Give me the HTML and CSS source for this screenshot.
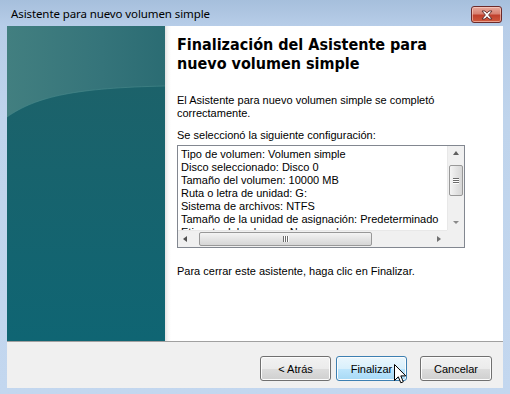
FILE: index.html
```html
<!DOCTYPE html>
<html lang="es">
<head>
<meta charset="utf-8">
<title>Asistente para nuevo volumen simple</title>
<link rel="stylesheet" href="styles.css">
</head>
<body>
<div class="window">
  <div class="titlebar">
    <span class="title">Asistente para nuevo volumen simple</span>
    <div class="close">
      <svg width="14" height="10" viewBox="0 0 14 10">
        <path d="M2 1 L5 1 L7 3.2 L9 1 L12 1 L8.6 5 L12 9 L9 9 L7 6.8 L5 9 L2 9 L5.4 5 Z" fill="#ffffff" stroke="#5a2a28" stroke-width="0.9" stroke-linejoin="round"/>
      </svg>
    </div>
  </div>
  <div class="client">
    <div class="main">
      <div class="side">
        <svg class="wave" width="158" height="315" viewBox="0 0 158 315" preserveAspectRatio="none">
          <defs>
            <linearGradient id="low" x1="0" y1="0" x2="0" y2="1">
              <stop offset="0" stop-color="#1c626a"/>
              <stop offset="1" stop-color="#0f6573"/>
            </linearGradient>
          </defs>
          <path d="M0 91 C 30 70, 70 62, 158 60 L158 315 L0 315 Z" fill="url(#low)"/>
          <path d="M0 91 C 30 70, 70 62, 158 60" fill="none" stroke="#4a8a8c" stroke-width="1" opacity="0.6"/>
        </svg>
      </div>
      <div class="content">
        <h1 class="heading">Finalización del Asistente para nuevo volumen simple</h1>
        <p class="text intro">El Asistente para nuevo volumen simple se completó correctamente.</p>
        <p class="text label">Se seleccionó la siguiente configuración:</p>
        <div class="listbox">
          <div class="lines">
            <div>Tipo de volumen: Volumen simple</div>
            <div>Disco seleccionado: Disco 0</div>
            <div>Tamaño del volumen: 10000 MB</div>
            <div>Ruta o letra de unidad: G:</div>
            <div>Sistema de archivos: NTFS</div>
            <div>Tamaño de la unidad de asignación: Predeterminado</div>
            <div>Etiqueta del volumen: Nuevo vol</div>
          </div>
          <div class="vscroll">
            <span class="arrow up"></span>
            <div class="vtrack"><div class="vthumb"><span class="grip-h"></span><span class="grip-h"></span><span class="grip-h"></span></div></div>
            <span class="arrow down"></span>
          </div>
          <div class="hscroll">
            <span class="arrow left"></span>
            <div class="htrack"><div class="hthumb"><span class="grip-v"></span><span class="grip-v"></span><span class="grip-v"></span></div></div>
            <span class="arrow right"></span>
          </div>
          <div class="corner"></div>
        </div>
        <p class="text closing">Para cerrar este asistente, haga clic en Finalizar.</p>
      </div>
    </div>
    <div class="footer">
      <button class="btn">&lt; Atrás</button>
      <button class="btn hover">Finalizar</button>
      <button class="btn cancel">Cancelar</button>
    </div>
  </div>
  <svg class="cursor" width="13" height="21" viewBox="0 0 13 21">
    <path d="M0.5 0.5 L0.5 16.5 L4.3 12.8 L6.8 18.8 L9.3 17.8 L6.8 11.9 L11.8 11.9 Z" fill="#ffffff" stroke="#000000" stroke-width="1" stroke-linejoin="miter"/>
  </svg>
</div>
</body>
</html>
```

FILE: styles.css
```css
* { box-sizing: border-box; }
html, body { margin: 0; padding: 0; }
body {
  width: 510px;
  height: 394px;
  overflow: hidden;
  font-family: "Liberation Sans", Arial, sans-serif;
}
.window {
  position: relative;
  width: 510px;
  height: 394px;
  background: linear-gradient(to bottom, #a6bfdc 0px, #b7cde8 26px, #bfd4ec 120px, #c3d7ef 394px);
  display: flex;
  flex-direction: column;
}
.titlebar {
  height: 26px;
  display: flex;
  align-items: flex-start;
  justify-content: space-between;
  padding: 0 8px 0 11px;
}
.title {
  font-family: "Noto Sans", "Open Sans", sans-serif;
  font-size: 11.5px;
  color: #000;
  margin-top: 6px;
  letter-spacing: -0.1px;
}
.close {
  margin-top: 6px;
  width: 31px;
  height: 17px;
  border: 1px solid #6b2a2a;
  border-radius: 3px;
  background: linear-gradient(to bottom, #e8a89c 0%, #d88272 45%, #c0402c 55%, #cf5a3e 100%);
  box-shadow: inset 0 0 0 1px rgba(255,220,210,0.55);
  display: flex;
  align-items: center;
  justify-content: center;
}
.client {
  margin: 0 7px;
  height: 362px;
  display: flex;
  flex-direction: column;
}
.main {
  height: 315px;
  display: flex;
  background: #fff;
}
.side {
  width: 158px;
  flex: none;
  position: relative;
  background: linear-gradient(to right, #427f80 0%, #35747a 60%, #2b6c73 100%);
}
.wave { display: block; }
.content {
  flex: 1;
  padding: 9px 0 0 12px;
  background: linear-gradient(to right, #e2e2e2 0px, #f6f6f6 3px, #ffffff 6px);
}
.heading {
  margin: 0;
  font-family: "DejaVu Sans", Verdana, sans-serif;
  font-stretch: condensed;
  font-weight: bold;
  font-size: 16px;
  line-height: 19px;
  width: 300px;
  color: #000;
}
.text {
  margin: 0;
  font-family: "Liberation Sans", Arial, sans-serif;
  font-size: 11px;
  line-height: 13px;
  color: #000;
}
.intro { margin-top: 21px; width: 260px; }
.label { margin-top: 9px; }
.listbox {
  margin-top: 3px;
  width: 288px;
  height: 103px;
  border: 1px solid #828790;
  display: grid;
  grid-template-columns: 1fr 17px;
  grid-template-rows: 1fr 17px;
  background: #fff;
}
.lines {
  overflow: hidden;
  padding: 2px 0 0 3px;
  font-family: "Liberation Sans", Arial, sans-serif;
  font-size: 11px;
  line-height: 13px;
  white-space: nowrap;
  color: #000;
}
.vscroll {
  background: #f0f0f0;
  border-left: 1px solid #e8e8e8;
  display: flex;
  flex-direction: column;
  align-items: center;
}
.vtrack { flex: 1; width: 100%; padding: 2px 1px 0 1px; }
.vthumb {
  height: 31px;
  border: 1px solid #989898;
  border-radius: 2px;
  background: linear-gradient(to right, #f4f4f4, #e4e4e4 50%, #d6d6d6);
  display: flex;
  flex-direction: column;
  align-items: center;
  justify-content: center;
  gap: 1px;
}
.grip-h { width: 6px; height: 1px; background: #6b6b6b; box-shadow: 0 1px 0 #fff; }
.hscroll {
  background: #f0f0f0;
  border-top: 1px solid #e8e8e8;
  display: flex;
  align-items: center;
}
.htrack { flex: 1; height: 100%; padding: 1px 0 1px 4px; }
.hthumb {
  width: 173px;
  height: 100%;
  border: 1px solid #989898;
  border-radius: 2px;
  background: linear-gradient(to bottom, #f4f4f4, #e4e4e4 50%, #d6d6d6);
  display: flex;
  align-items: center;
  justify-content: center;
  gap: 1px;
}
.grip-v { width: 1px; height: 6px; background: #6b6b6b; box-shadow: 1px 0 0 #fff; }
.corner { background: #f0f0f0; }
.arrow { width: 17px; height: 17px; flex: none; position: relative; }
.arrow::after {
  content: "";
  position: absolute;
  width: 0; height: 0;
  border: 3.5px solid transparent;
}
.arrow.up::after { left: 5px; top: 5px; border-bottom: 4px solid #606060; border-top: 0; }
.arrow.down::after { left: 5px; top: 8px; border-top: 3px solid #8a8a8a; border-bottom: 0; }
.arrow.left::after { left: 5px; top: 5px; border-right: 4px solid #505050; border-left: 0; }
.arrow.right::after { left: 7px; top: 5px; border-left: 4px solid #707070; border-right: 0; }
.closing { margin-top: 17px; }
.footer {
  height: 47px;
  flex: none;
  background: #f0f0f0;
  border-top: 1px solid #a0a0a0;
  display: flex;
  justify-content: flex-end;
  align-items: flex-start;
  padding: 14px 11px 0 0;
  gap: 5px;
}
.btn {
  width: 71px;
  height: 25px;
  border: 1px solid #707070;
  border-radius: 3px;
  background: linear-gradient(to bottom, #f2f2f2 0%, #ebebeb 50%, #dddddd 51%, #cfcfcf 100%);
  box-shadow: inset 0 0 0 1px #fcfcfc;
  font-family: "Liberation Sans", Arial, sans-serif;
  font-size: 11px;
  color: #000;
  padding: 0;
}
.btn.hover {
  border-color: #3c7fb1;
  background: linear-gradient(to bottom, #eaf6fd 0%, #d9f0fc 50%, #bee6fd 51%, #a7d9f5 100%);
}
.btn.cancel { margin-left: 8px; width: 72px; }
.cursor {
  position: absolute;
  left: 394px;
  top: 364px;
}
```
